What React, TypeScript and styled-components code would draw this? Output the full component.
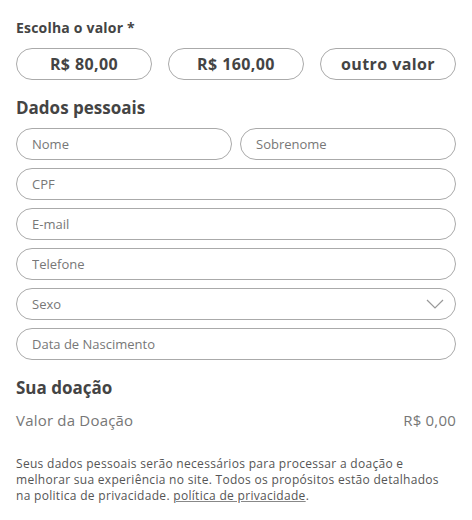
import React from "react";
import styled, { createGlobalStyle } from "styled-components";

const GlobalStyle = createGlobalStyle`
  * { box-sizing: border-box; }
  body {
    margin: 0;
    background: #fff;
    font-family: "Open Sans", "Noto Sans", sans-serif;
    color: #444;
  }
`;

const Form = styled.form`
  width: 472px;
  padding: 20px 16px 16px;
  display: flex;
  flex-direction: column;
`;

const Label = styled.div`
  font-size: 14px;
  line-height: 16px;
  font-weight: 700;
  letter-spacing: 0.2px;
  color: #444;
  margin-bottom: 12px;
`;

const Heading = styled.h3`
  margin: 16px 0 8px;
  font-size: 17px;
  line-height: 24px;
  font-weight: 700;
  color: #444;
`;

const AmountRow = styled.div`
  display: grid;
  grid-template-columns: repeat(3, 1fr);
  gap: 16px;
`;

const AmountButton = styled.button`
  height: 32px;
  border: 1px solid #aaa;
  border-radius: 16px;
  background: #fff;
  font-family: inherit;
  font-size: 16px;
  font-weight: 700;
  letter-spacing: 0.4px;
  color: #444;
  cursor: pointer;
`;

const Fields = styled.div`
  display: flex;
  flex-direction: column;
  gap: 8px;
`;

const Pair = styled.div`
  display: grid;
  grid-template-columns: 1fr 1fr;
  gap: 8px;
`;

const Input = styled.input`
  width: 100%;
  height: 32px;
  border: 1px solid #aaa;
  border-radius: 16px;
  padding: 0 15px;
  background: #fff;
  font-family: inherit;
  font-size: 13px;
  color: #444;
  outline: none;

  &::placeholder {
    color: #777;
  }
`;

const SelectBox = styled.div`
  height: 32px;
  border: 1px solid #aaa;
  border-radius: 16px;
  padding: 0 15px;
  display: flex;
  align-items: center;
  justify-content: space-between;
  font-size: 13px;
  color: #777;
`;

const Chevron = styled.svg`
  width: 18px;
  height: 10px;
  margin-right: -4px;
`;

const SummaryRow = styled.div`
  display: flex;
  justify-content: space-between;
  font-size: 15px;
  line-height: 24px;
  letter-spacing: 0.2px;
  color: #777;
`;

const Disclaimer = styled.p`
  margin: 24px 0 0;
  font-size: 12px;
  line-height: 16px;
  letter-spacing: 0.3px;
  color: #555;
`;

const Link = styled.a`
  color: #555;
  text-decoration: underline;
  text-decoration-color: #888;
`;

export default function App() {
  return (
    <>
      <GlobalStyle />
      <Form onSubmit={(e) => e.preventDefault()}>
        <Label>Escolha o valor *</Label>
        <AmountRow>
          <AmountButton type="button">R$ 80,00</AmountButton>
          <AmountButton type="button">R$ 160,00</AmountButton>
          <AmountButton type="button">outro valor</AmountButton>
        </AmountRow>

        <Heading>Dados pessoais</Heading>
        <Fields>
          <Pair>
            <Input placeholder="Nome" />
            <Input placeholder="Sobrenome" />
          </Pair>
          <Input placeholder="CPF" />
          <Input placeholder="E-mail" />
          <Input placeholder="Telefone" />
          <SelectBox>
            <span>Sexo</span>
            <Chevron viewBox="0 0 18 10" fill="none">
              <path d="M1 1l8 8 8-8" stroke="#999" strokeWidth="1.2" />
            </Chevron>
          </SelectBox>
          <Input placeholder="Data de Nascimento" />
        </Fields>

        <Heading>Sua doação</Heading>
        <SummaryRow>
          <span>Valor da Doação</span>
          <span>R$ 0,00</span>
        </SummaryRow>

        <Disclaimer>
          Seus dados pessoais serão necessários para processar a doação e
          melhorar sua experiência no site. Todos os propósitos estão
          detalhados na politica de privacidade.{" "}
          <Link href="#">política de privacidade</Link>.
        </Disclaimer>
      </Form>
    </>
  );
}
